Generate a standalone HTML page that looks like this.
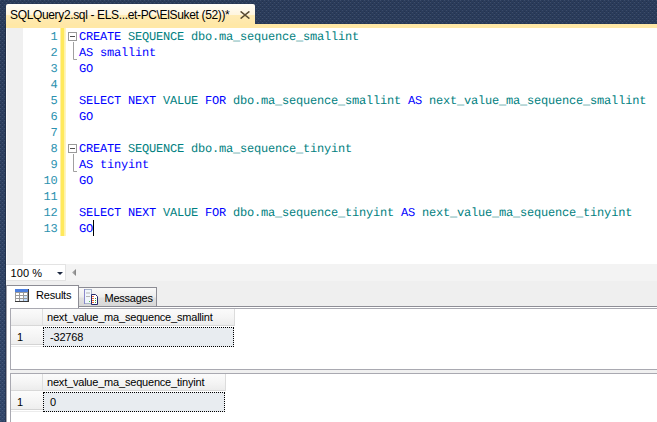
<!DOCTYPE html>
<html><head><meta charset="utf-8">
<style>
*{margin:0;padding:0;box-sizing:border-box}
html,body{width:657px;height:422px;overflow:hidden;background:#2c3d5b}
body{position:relative;font-family:"Liberation Sans",sans-serif}
.a{position:absolute}
svg{display:block}
#tab{left:6px;top:4px;width:249px;height:20px;border-radius:2px 2px 0 0;
 background:linear-gradient(#fffdf7 0,#fff5de 11px,#ffebb4 11px,#ffe8a8 100%)}
#tabtxt{left:10px;top:8px;font-size:12px;letter-spacing:-0.35px;color:#000;white-space:nowrap;line-height:14px}
#strip{left:6px;top:24px;width:651px;height:4px;background:#ffe8a6}
#editor{left:6px;top:28px;width:651px;height:236px;background:#fff}
#margin{left:6px;top:28px;width:17px;height:236px;background:linear-gradient(90deg,#fafafa 0,#fafafa 1px,#f0f0f0 1px)}
#ybar{left:60px;top:28px;width:6px;height:208px;background:linear-gradient(90deg,#fff1a8 0,#fff1a8 1px,#ffe95c 1px,#ffe95c 4px,#fff0a0 4px,#fff6c8 100%)}
.code{position:absolute;left:79px;font-family:"Liberation Mono",monospace;font-size:12px;letter-spacing:-0.2px;text-rendering:geometricPrecision;white-space:pre;line-height:16px;color:#0000ff}
.ln{position:absolute;left:19.5px;width:38px;text-align:right;font-family:"Liberation Mono",monospace;font-size:12px;letter-spacing:-0.2px;text-rendering:geometricPrecision;line-height:16px;color:#2b91af}
.t{color:#008080}
.ui{font-size:11px;letter-spacing:-0.2px;white-space:nowrap;color:#000;line-height:13px}
#hs{left:6px;top:264px;width:651px;height:17px;background:#f3f3f3}
#zoom{left:6px;top:264px;width:60px;height:17px;background:#fff;border:1px solid #e3e3e3;border-left:none}
#restabs{left:6px;top:281px;width:651px;height:141px;background:#efefef}
#panel{left:6px;top:307px;width:651px;height:115px;background:#fff}
#tline{left:6px;top:306px;width:651px;height:1px;background:#8e8e96}
#rtab{left:6px;top:285px;width:73px;height:23px;background:#fff;border:1px solid #8c8c94;border-bottom:none}
#mtab{left:78px;top:287px;width:79px;height:20px;border:1px solid #8c8c94;background:linear-gradient(#f9f9f9 0,#ededed 9px,#e0e0e0 10px,#d8d8d8 100%)}
.grid{position:absolute;left:10px;width:647px;background:#fff;border:1px solid #a9a9b1;border-right:none}
.hdr{position:absolute;left:0;top:0;height:17px;background:linear-gradient(#fbfbfb 0,#f5f5f5 50%,#ececec 100%);border-bottom:1px solid #d8d8d8}
.hsep{position:absolute;top:0;width:1px;height:16px;background:#dedede}
.rh{position:absolute;left:0;top:17px;width:32px;height:19px;background:linear-gradient(#fcfcfc 0,#f7f7f7 40%,#eeeeee 100%);border-bottom:1px solid #d4d4d4}
.cell{position:absolute;left:32px;top:18px;height:20px;background:#e8ecf0;border:1px dotted #000}
</style></head><body>
<svg class="a" style="left:0;top:0" width="657" height="422"><defs><linearGradient id="g" x1="0" y1="0" x2="0" y2="1"><stop offset="0" stop-color="#2a3b5a"/><stop offset="1" stop-color="#32476b"/></linearGradient><pattern id="p" width="4" height="4" patternUnits="userSpaceOnUse"><rect x="0" y="0" width="1" height="1" fill="#fff" fill-opacity="0.09"/><rect x="2" y="2" width="1" height="1" fill="#fff" fill-opacity="0.09"/><rect x="2" y="1" width="1" height="1" fill="#000" fill-opacity="0.14"/><rect x="0" y="3" width="1" height="1" fill="#000" fill-opacity="0.14"/></pattern></defs><rect width="657" height="422" fill="url(#g)"/><rect width="657" height="422" fill="url(#p)"/><rect x="5" y="24" width="1" height="398" fill="#000" fill-opacity="0.22"/></svg>
<div id="tab" class="a"></div>
<div id="tabtxt" class="a">SQLQuery2.sql - ELS...et-PC\ElSuket (52))*</div>
<svg class="a" style="left:240px;top:11px" width="10" height="8"><path d="M0.6 0.4L9.4 7.6M9.4 0.4L0.6 7.6" stroke="#5a4c34" stroke-width="1.5"/></svg>
<div id="strip" class="a"></div>
<div id="editor" class="a"></div>
<div id="margin" class="a"></div>
<div id="ybar" class="a"></div>
<svg class="a" style="left:66px;top:28px" width="14" height="208">
 <rect x="2.5" y="4.5" width="8" height="8" fill="#fff" stroke="#9a9a9a"/>
 <path d="M4 8.5H9" stroke="#505050"/>
 <path d="M7.5 14V31.5H11" stroke="#a0a0a0" fill="none"/>
 <rect x="2.5" y="116.5" width="8" height="8" fill="#fff" stroke="#9a9a9a"/>
 <path d="M4 120.5H9" stroke="#505050"/>
 <path d="M7.5 126V143.5H11" stroke="#a0a0a0" fill="none"/>
</svg>
<div class="ln" style="top:29px">1<br>2<br>3<br>4<br>5<br>6<br>7<br>8<br>9<br>10<br>11<br>12<br>13</div>
<div class="code" style="top:29px">CREATE <span class="t">SEQUENCE dbo.ma_sequence_smallint</span>
AS smallint
GO

SELECT NEXT <span class="t">VALUE</span> FOR <span class="t">dbo.ma_sequence_smallint</span> AS <span class="t">next_value_ma_sequence_smallint</span>
GO

CREATE <span class="t">SEQUENCE dbo.ma_sequence_tinyint</span>
AS tinyint
GO

SELECT NEXT <span class="t">VALUE</span> FOR <span class="t">dbo.ma_sequence_tinyint</span> AS <span class="t">next_value_ma_sequence_tinyint</span>
GO</div>
<div class="a" style="left:93px;top:220px;width:1px;height:16px;background:#000"></div>
<div id="hs" class="a"></div>
<div id="zoom" class="a"></div>
<div class="a ui" style="left:10.5px;top:267px;letter-spacing:0.1px">100 %</div>
<svg class="a" style="left:57px;top:272px" width="6" height="3"><path d="M0 0H6L3 3Z" fill="#1c2840"/></svg>
<svg class="a" style="left:72px;top:269px" width="4" height="7"><defs><linearGradient id="ag" x1="0" y1="0" x2="1" y2="0"><stop offset="0" stop-color="#b8b8b8"/><stop offset="1" stop-color="#808080"/></linearGradient></defs><path d="M4 0V7L0 3.5Z" fill="url(#ag)"/></svg>
<div id="restabs" class="a"></div>
<div id="panel" class="a"></div>
<div id="tline" class="a"></div>
<div id="mtab" class="a"></div>
<div id="rtab" class="a"></div>
<div class="a" style="left:6px;top:285px;width:1px;height:137px;background:#a4a4ac"></div>
<svg class="a" style="left:15px;top:289px" width="14" height="13">
 <rect x="0" y="0" width="14" height="13" fill="#3a3a3a"/>
 <rect x="0" y="0" width="13" height="3" fill="#4b7fe0"/>
 <rect x="0" y="3" width="13" height="9" fill="#9a9a9a"/>
 <rect x="1" y="4" width="3" height="2" fill="#fff"/><rect x="5" y="4" width="3" height="2" fill="#fff"/><rect x="9" y="4" width="3" height="2" fill="#fff"/>
 <rect x="1" y="7" width="3" height="2" fill="#fff"/><rect x="5" y="7" width="3" height="2" fill="#fff"/><rect x="9" y="7" width="3" height="2" fill="#cfe6ff"/>
 <rect x="1" y="10" width="3" height="2" fill="#fff"/><rect x="5" y="10" width="3" height="2" fill="#e4f0ff"/><rect x="9" y="10" width="3" height="2" fill="#bcdcff"/>
</svg>
<div class="a ui" style="left:36px;top:289px">Results</div>
<svg class="a" style="left:84px;top:289px" width="15" height="16">
 <rect x="0.5" y="0.5" width="7" height="14" fill="#f0f6fc" stroke="#a8b4c8"/><path d="M0.5 0V15" stroke="#8a88cc"/>
 <path d="M2 4H6M2 7.5H6" stroke="#b4b4b4"/>
 <rect x="5" y="12" width="1" height="1" fill="#50c050"/>
 <path d="M7.5 5.5H11.5L13.5 7.5V15.5H7.5Z" fill="#fff" stroke="#262868"/>
 <rect x="8" y="7" width="2" height="1" fill="#f06a40"/><rect x="8" y="9" width="2" height="1" fill="#f06a40"/><rect x="8" y="11" width="2" height="1" fill="#f06a40"/><rect x="8" y="13" width="2" height="1" fill="#f06a40"/>
 <rect x="11" y="9" width="1" height="1" fill="#3a9a3a"/><rect x="11" y="11" width="1" height="1" fill="#3a9a3a"/><rect x="11" y="13" width="1" height="1" fill="#3a9a3a"/>
</svg>
<div class="a ui" style="left:104.5px;top:292px;letter-spacing:-0.25px">Messages</div>

<div class="grid" style="top:308px;height:62px">
 <div class="hdr" style="width:224px;border-right:1px solid #dcdcdc"></div>
 <div class="hsep" style="left:31px"></div>
 <div class="a ui" style="left:36px;top:2px">next_value_ma_sequence_smallint</div>
 <div class="rh"></div>
 <div class="a" style="left:0;top:37px;width:32px;height:1px;background:#ececec"></div>
 <div class="a ui" style="left:6px;top:22px">1</div>
 <div class="cell" style="width:191px"></div>
 <div class="a ui" style="left:39px;top:22px">-32768</div>
</div>
<div class="a" style="left:10px;top:370px;width:647px;height:3px;background:#f0f0f0"></div>
<div class="grid" style="top:373px;height:60px">
 <div class="hdr" style="width:215px;border-right:1px solid #dcdcdc"></div>
 <div class="hsep" style="left:31px"></div>
 <div class="a ui" style="left:36px;top:2px">next_value_ma_sequence_tinyint</div>
 <div class="rh"></div>
 <div class="a" style="left:0;top:37px;width:32px;height:1px;background:#ececec"></div>
 <div class="a ui" style="left:6px;top:22px">1</div>
 <div class="cell" style="width:182px"></div>
 <div class="a ui" style="left:39px;top:22px">0</div>
</div>
</body></html>
